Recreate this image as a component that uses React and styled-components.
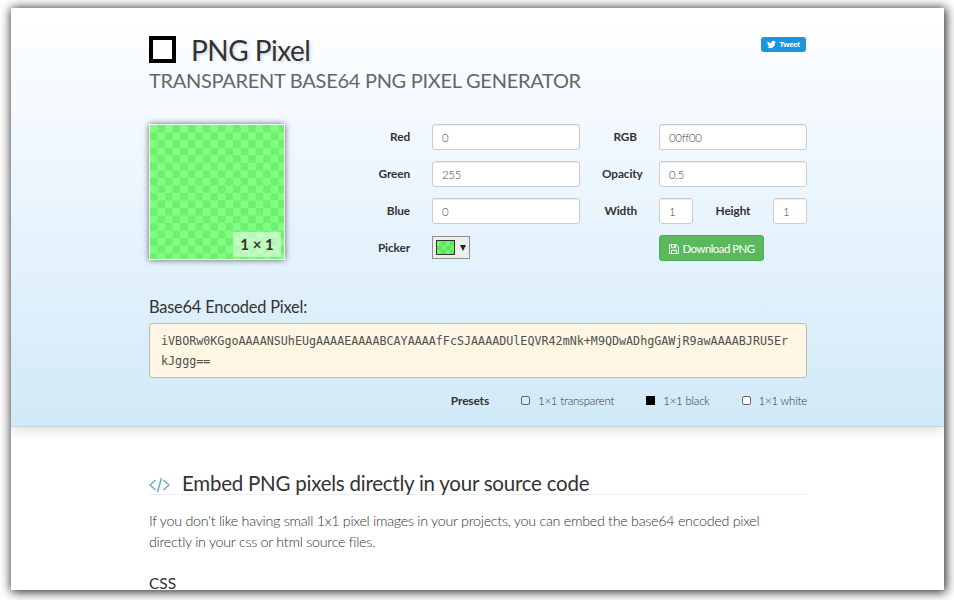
import React from 'react';
import styled, { createGlobalStyle } from 'styled-components';
import { FaTwitter } from 'react-icons/fa';

const GlobalStyle = createGlobalStyle`
  *, *::before, *::after { box-sizing: border-box; }
  body {
    margin: 0;
    background: #fff;
    color: #333;
    font-family: Lato, 'Liberation Sans', sans-serif;
    overflow: hidden;
  }
  h1, h2, h3, h4, p { margin: 0; font-weight: 400; }
`;

const Stage = styled.div`
  height: 600px;
  padding: 8px 10px 10px 11px;
  overflow: hidden;
`;

const Page = styled.div`
  height: 582px;
  overflow: hidden;
  background: #fff;
`;

const Frame = styled.div`
  box-shadow: 1px 1px 10px 1px rgba(0, 0, 0, 0.85);
`;

const Hero = styled.header`
  height: 419px;
  padding: 28px 137px 0 138px;
  background: linear-gradient(#ffffff 0%, #f0f8fe 33%, #d1e9f8 100%);
  border-bottom: 1px solid #c3d5df;
  box-shadow: 0 2px 12px rgba(0, 0, 0, 0.16);
`;

const TitleBar = styled.div`
  display: flex;
  align-items: flex-start;
  height: 28px;
`;

const Logo = styled.span`
  width: 27px;
  height: 27px;
  margin-right: 15px;
  border: 4px solid #000;
  background: #fff;
`;

const Title = styled.h1`
  flex: 1;
  font-size: 28px;
  line-height: 28px;
  letter-spacing: -0.5px;
  text-shadow: 2px 2px 3px rgba(120, 140, 170, 0.25);
`;

const TweetButton = styled.button`
  display: flex;
  align-items: center;
  justify-content: center;
  gap: 3px;
  width: 45px;
  height: 15px;
  margin: 1px 1px 0 0;
  padding: 0;
  border: 0;
  border-radius: 3px;
  background: #1b95e0;
  color: #fff;
  font: 700 8px 'Liberation Sans', sans-serif;
  letter-spacing: -0.35px;
`;

const Subtitle = styled.h2`
  height: 32px;
  padding-top: 3px;
  font-size: 20px;
  line-height: 27px;
  letter-spacing: -0.28px;
  color: #666;
  white-space: nowrap;
`;

const Generator = styled.div`
  display: flex;
  justify-content: space-between;
  margin-top: 28px;
`;

const Preview = styled.div`
  display: flex;
  align-items: flex-end;
  justify-content: flex-end;
  width: 136px;
  height: 136px;
  padding: 2px 3px;
  border: 1px solid #f4fff4;
  background: repeating-conic-gradient(#70ee70 0 25%, #80ff80 0 50%) 0 0 / 15.1px 15.1px;
  box-shadow: 0 0 6px rgba(0, 0, 0, 0.6);
`;

const SizeTag = styled.span`
  width: 48px;
  height: 25px;
  background: rgba(255, 255, 255, 0.5);
  color: #333;
  font-size: 15px;
  font-weight: 700;
  line-height: 25px;
  text-align: center;
`;

const Fields = styled.div`
  display: grid;
  grid-template-columns: 60px 148px 35px 148px;
  grid-auto-rows: 26px;
  column-gap: 22px;
  row-gap: 11px;
`;

const Label = styled.label`
  display: block;
  font-size: 11.8px;
  font-weight: 700;
  line-height: 26px;
  letter-spacing: -0.1px;
  text-align: right;
  white-space: nowrap;
`;

const Input = styled.input`
  width: ${(p) => p.$width || '100%'};
  height: 26px;
  padding: 0 9px;
  border: 1px solid #ccc;
  border-radius: 3px;
  background: #fff;
  color: #444;
  font: 300 11.4px Lato, sans-serif;
  letter-spacing: -0.25px;
  box-shadow: inset 0 1px 1px rgba(0, 0, 0, 0.075);
`;

const Split = styled.div`
  display: flex;
  justify-content: space-between;
`;

const Picker = styled.button`
  display: flex;
  align-items: center;
  gap: 5px;
  width: 38px;
  height: 23px;
  margin-top: 1px;
  padding: 0 3px;
  border: 1px solid #918f8c;
  background: #eee;
`;

const Swatch = styled.span`
  width: 19px;
  height: 15px;
  border: 1px solid #333;
  background: repeating-conic-gradient(#5be65b 0 25%, #74f474 0 50%) 0 0 / 9px 9px;
`;

const Caret = styled.span`
  border: 3px solid transparent;
  border-top: 6px solid #222;
  border-bottom: 0;
`;

const DownloadButton = styled.button`
  display: flex;
  align-items: center;
  justify-content: center;
  gap: 4px;
  width: 105px;
  height: 26px;
  padding: 1px 0 0;
  border: 1px solid #4cae4c;
  border-radius: 3px;
  background: #5cb85c;
  color: #fff;
  font: 400 11.4px Lato, sans-serif;
  letter-spacing: -0.53px;
  white-space: nowrap;
`;

const SaveIcon = styled.svg`
  width: 10px;
  height: 10px;
  fill: none;
  stroke: #fff;
  stroke-width: 1;
  stroke-linejoin: round;
`;

const OutputTitle = styled.h3`
  margin-top: 36px;
  height: 26px;
  font-size: 16.4px;
  line-height: 19px;
  letter-spacing: -0.2px;
`;

const Output = styled.pre`
  height: 55px;
  margin: 0;
  padding: 7px 14px 7px 11px;
  border: 1px solid #b9bdb8;
  border-radius: 3px;
  background: #fdf6e3;
  color: #505050;
  font: 11.7px/20px 'DejaVu Sans Mono', monospace;
  letter-spacing: 0.01px;
  white-space: pre-wrap;
  word-break: break-all;
`;

const Presets = styled.div`
  display: flex;
  justify-content: flex-end;
  align-items: center;
  gap: 32px;
  height: 26px;
  margin-top: 9px;
  font-size: 11.4px;
  letter-spacing: -0.18px;
`;

const PresetsLabel = styled.b`
  font-size: 12px;
`;

const Preset = styled.span`
  display: flex;
  align-items: center;
  gap: 8px;
  font-weight: 300;
`;

const Box = styled.i`
  width: 9px;
  height: 9px;
  border: 1px solid ${(p) => (p.$fill === '#000' ? '#000' : '#666')};
  border-radius: ${(p) => (p.$fill === '#000' ? 0 : 2)}px;
  background: ${(p) => p.$fill};
`;

const Article = styled.main`
  padding: 43px 137px 0 138px;
`;

const SectionTitle = styled.h2`
  display: flex;
  align-items: center;
  gap: 12px;
  height: 25px;
  padding-top: 2px;
  border-bottom: 1px solid #eee;
  font-size: 20.5px;
  letter-spacing: -0.24px;
  white-space: nowrap;
`;

const CodeIcon = styled.svg`
  width: 21px;
  height: 16px;
  margin-top: 3px;
  fill: none;
  stroke: #6fabba;
  stroke-width: 1.5;
`;

const Paragraph = styled.p`
  margin-top: 16px;
  font-size: 14.3px;
  font-weight: 300;
  line-height: 20.5px;
  letter-spacing: -0.28px;
  white-space: pre;
`;

const Subheading = styled.h4`
  margin-top: 24px;
  font-size: 15.5px;
  line-height: 14px;
`;

const ENCODED =
  'iVBORw0KGgoAAAANSUhEUgAAAAEAAAABCAYAAAAfFcSJAAAADUlEQVR42mNk+M9QDwADhgGAWjR9awAAAABJRU5ErkJggg==';

const PRESETS = [
  { name: '1×1 transparent', fill: 'transparent' },
  { name: '1×1 black', fill: '#000' },
  { name: '1×1 white', fill: '#fff' },
];

export default function App() {
  return (
    <Stage>
      <GlobalStyle />
      <Frame>
        <Page>
          <Hero>
            <TitleBar>
              <Logo />
              <Title>PNG Pixel</Title>
              <TweetButton><FaTwitter size={9} />Tweet</TweetButton>
            </TitleBar>
            <Subtitle>TRANSPARENT BASE64 PNG PIXEL GENERATOR</Subtitle>
            <Generator>
              <Preview><SizeTag>1 × 1</SizeTag></Preview>
              <Fields>
                <Label>Red</Label>
                <Input defaultValue="0" />
                <Label>RGB</Label>
                <Input defaultValue="00ff00" />
                <Label>Green</Label>
                <Input defaultValue="255" />
                <Label>Opacity</Label>
                <Input defaultValue="0.5" />
                <Label>Blue</Label>
                <Input defaultValue="0" />
                <Label>Width</Label>
                <Split>
                  <Input $width="34px" defaultValue="1" />
                  <Label>Height</Label>
                  <Input $width="34px" defaultValue="1" />
                </Split>
                <Label>Picker</Label>
                <Picker><Swatch /><Caret /></Picker>
                <span />
                <DownloadButton>
                  <SaveIcon viewBox="0 0 10 10">
                    <path d="M.5 .5H7.200L9.500 2.800V9.500H.5ZM2.500 9.500V6.300H7.500V9.500M2.500 .5V3.700H6.700V.5M5.300 1V3" />
                  </SaveIcon>
                  Download PNG
                </DownloadButton>
              </Fields>
            </Generator>
            <OutputTitle>Base64 Encoded Pixel:</OutputTitle>
            <Output>{ENCODED}</Output>
            <Presets>
              <PresetsLabel>Presets</PresetsLabel>
              {PRESETS.map((p) => (
                <Preset key={p.name}><Box $fill={p.fill} />{p.name}</Preset>
              ))}
            </Presets>
          </Hero>
          <Article>
            <SectionTitle>
              <CodeIcon viewBox="0 0 21 16">
                <path d="M6.5 3 1 8l5.500 5M14.500 3 20 8l-5.500 5M12.500 1 8.500 15" />
              </CodeIcon>
              Embed PNG pixels directly in your source code
            </SectionTitle>
            <Paragraph>
              {"If you don't like having small 1x1 pixel images in your projects, you can embed the base64 encoded pixel\ndirectly in your css or html source files."}
            </Paragraph>
            <Subheading>CSS</Subheading>
          </Article>
        </Page>
      </Frame>
    </Stage>
  );
}
